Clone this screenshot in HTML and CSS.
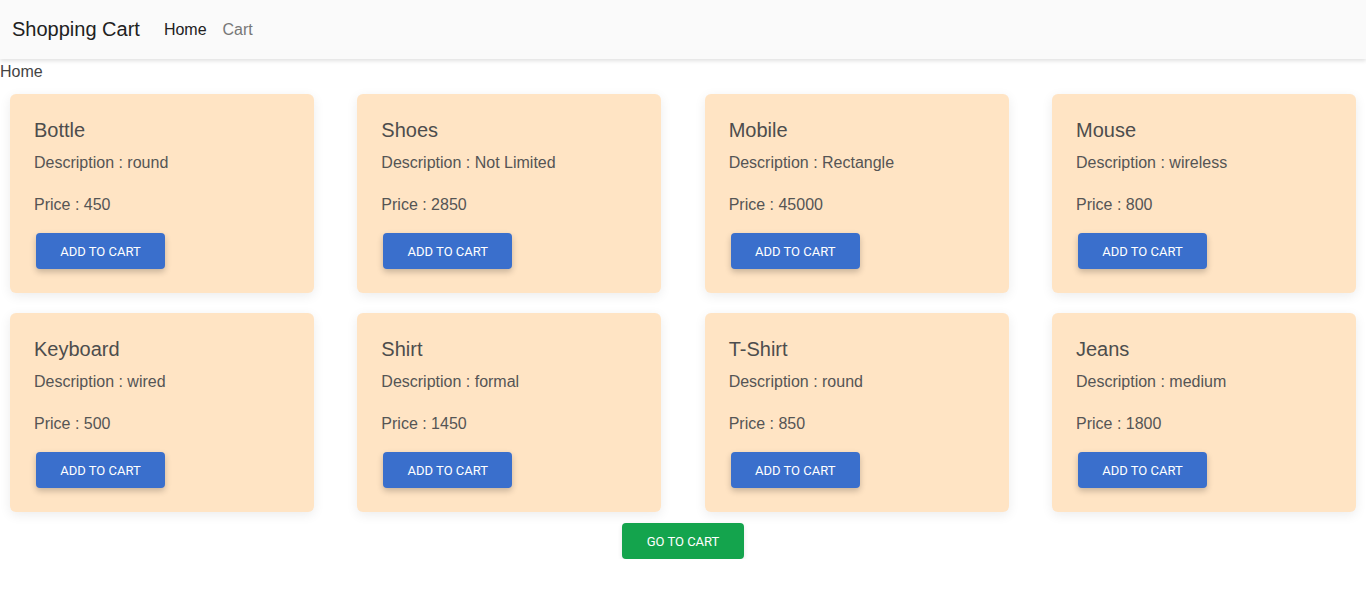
FILE: index.html
```html
<!DOCTYPE html>
<html lang="en">
<head>
<meta charset="utf-8">
<title>Shopping Cart</title>
<link rel="stylesheet" href="styles.css">
</head>
<body>
<nav class="navbar">
  <span class="brand">Shopping Cart</span>
  <a class="nav-link active" href="#">Home</a>
  <a class="nav-link" href="#">Cart</a>
</nav>
<div class="crumb">Home</div>
<main class="grid">
  <div class="card"><h2 class="title">Bottle</h2><p class="desc">Description : round</p><p class="price">Price : 450</p><button class="btn-add">Add to cart</button></div>
  <div class="card"><h2 class="title">Shoes</h2><p class="desc">Description : Not Limited</p><p class="price">Price : 2850</p><button class="btn-add">Add to cart</button></div>
  <div class="card"><h2 class="title">Mobile</h2><p class="desc">Description : Rectangle</p><p class="price">Price : 45000</p><button class="btn-add">Add to cart</button></div>
  <div class="card"><h2 class="title">Mouse</h2><p class="desc">Description : wireless</p><p class="price">Price : 800</p><button class="btn-add">Add to cart</button></div>
  <div class="card"><h2 class="title">Keyboard</h2><p class="desc">Description : wired</p><p class="price">Price : 500</p><button class="btn-add">Add to cart</button></div>
  <div class="card"><h2 class="title">Shirt</h2><p class="desc">Description : formal</p><p class="price">Price : 1450</p><button class="btn-add">Add to cart</button></div>
  <div class="card"><h2 class="title">T-Shirt</h2><p class="desc">Description : round</p><p class="price">Price : 850</p><button class="btn-add">Add to cart</button></div>
  <div class="card"><h2 class="title">Jeans</h2><p class="desc">Description : medium</p><p class="price">Price : 1800</p><button class="btn-add">Add to cart</button></div>
</main>
<div class="footer">
  <button class="btn-go">Go to cart</button>
</div>
</body>
</html>
```
FILE: styles.css
```css
* { box-sizing: border-box; }
body {
  margin: 0;
  font-family: "Liberation Sans", Arial, sans-serif;
  background: #fff;
  color: #212121;
}
.navbar {
  height: 59px;
  background: #fafafa;
  box-shadow: 0 2px 4px rgba(0,0,0,0.12);
  display: flex;
  align-items: center;
  padding: 0 12px;
  position: relative;
}
.brand {
  font-size: 20px;
  color: #212121;
  margin-right: 24px;
}
.nav-link {
  font-size: 16px;
  text-decoration: none;
  color: #777;
  margin-right: 16px;
}
.nav-link.active { color: #212121; }
.crumb {
  font-size: 16px;
  line-height: 24px;
  color: #444;
  margin-top: 1px;
}
.grid {
  display: grid;
  grid-template-columns: repeat(4, 304px);
  justify-content: space-between;
  row-gap: 20px;
  padding: 0 10px;
  margin-top: 10px;
}
.card {
  background: #ffe4c4;
  border-radius: 6px;
  padding: 24px 24px 23px;
  height: 199px;
  box-shadow: 0 3px 12px rgba(0,0,0,0.08);
  color: #555;
}
.title {
  margin: 0;
  font-size: 20px;
  font-weight: 400;
  line-height: 24px;
  color: #4d4d4d;
}
.desc {
  margin: 9px 0 0;
  font-size: 16px;
  line-height: 24px;
}
.price {
  margin: 18px 0 0;
  font-size: 16px;
  line-height: 24px;
}
.btn-add, .btn-go {
  border: none;
  border-radius: 4px;
  color: #fff;
  font-family: Roboto, "Liberation Sans", Arial, sans-serif;
  font-size: 13px;
  font-weight: 400;
  text-transform: uppercase;
  height: 36px;
  padding: 0;
  cursor: pointer;
}
.btn-add {
  margin: 16px 0 0 2px;
  width: 129px;
  background: #3a6fcc;
  box-shadow: 0 3px 6px rgba(0,0,0,0.22);
}
.footer {
  display: flex;
  justify-content: center;
  margin-top: 11px;
}
.btn-go {
  width: 122px;
  background: #14a44d;
  box-shadow: 0 2px 5px rgba(0,0,0,0.1);
}
```
